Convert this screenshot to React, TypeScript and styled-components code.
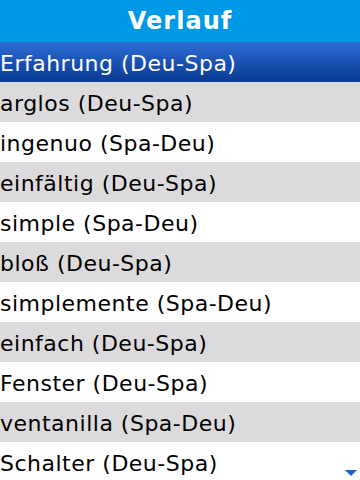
import styled, { createGlobalStyle } from 'styled-components';

const GlobalStyle = createGlobalStyle`
  body {
    margin: 0;
    background: #ffffff;
  }
`;

const Screen = styled.div`
  width: 360px;
  height: 480px;
  overflow: hidden;
  position: relative;
  display: flex;
  flex-direction: column;
  font-family: 'DejaVu Sans', 'Bitstream Vera Sans', Verdana, sans-serif;
`;

const TitleBar = styled.div`
  height: 42px;
  flex-shrink: 0;
  display: flex;
  align-items: center;
  justify-content: center;
  background-color: #0099e6;
  color: #ffffff;
  font-weight: bold;
  font-size: 24px;
  letter-spacing: 1px;
`;

const List = styled.div`
  display: flex;
  flex-direction: column;
`;

const Row = styled.div<{ $shade: 'sel' | 'gray' | 'white' }>`
  height: 40px;
  box-sizing: border-box;
  flex-shrink: 0;
  display: flex;
  align-items: center;
  padding: 2px 0 0 0;
  font-size: 22px;
  letter-spacing: 0.5px;
  white-space: nowrap;
  color: ${(p) => (p.$shade === 'sel' ? '#ffffff' : '#000000')};
  background: ${(p) =>
    p.$shade === 'sel'
      ? 'linear-gradient(to bottom, #2f6dd3 0%, #1a52b4 50%, #083a92 100%)'
      : p.$shade === 'gray'
        ? '#dcdadc'
        : '#ffffff'};
`;

const MoreArrow = styled.svg`
  position: absolute;
  right: 3px;
  bottom: 4px;
`;

const entries = [
  'Erfahrung (Deu-Spa)',
  'arglos (Deu-Spa)',
  'ingenuo (Spa-Deu)',
  'einfältig (Deu-Spa)',
  'simple (Spa-Deu)',
  'bloß (Deu-Spa)',
  'simplemente (Spa-Deu)',
  'einfach (Deu-Spa)',
  'Fenster (Deu-Spa)',
  'ventanilla (Spa-Deu)',
  'Schalter (Deu-Spa)',
];

const App = () => {
  return (
    <Screen>
      <GlobalStyle />
      <TitleBar>Verlauf</TitleBar>
      <List>
        {entries.map((text, i) => (
          <Row key={text} $shade={i === 0 ? 'sel' : i % 2 === 1 ? 'gray' : 'white'}>
            {text}
          </Row>
        ))}
      </List>
      <MoreArrow width="12" height="6" viewBox="0 0 12 6">
        <polygon points="0,0 12,0 6,6" fill="#1c5fcc" />
      </MoreArrow>
    </Screen>
  );
};

export default App;
